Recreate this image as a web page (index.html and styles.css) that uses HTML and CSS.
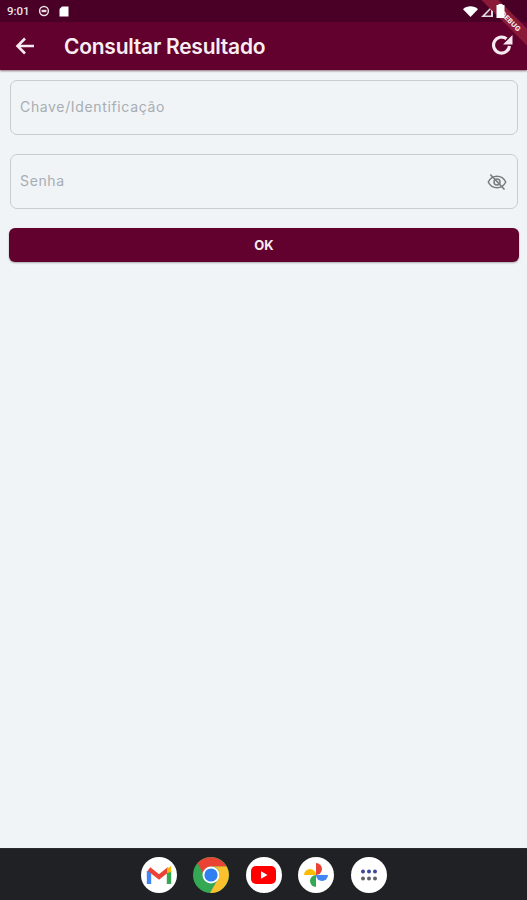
FILE: index.html
```html
<!DOCTYPE html>
<html lang="pt">
<head>
<meta charset="utf-8">
<title>Consultar Resultado</title>
<link rel="stylesheet" href="styles.css">
</head>
<body>
<div class="screen">
  <header class="status">
    <div class="status-left">
      <span class="time">9:01</span>
      <svg class="st-ic" width="12" height="12" viewBox="0 0 12 12"><circle cx="6" cy="6" r="4.4" fill="none" stroke="#e9dde3" stroke-width="1.5"/><rect x="3.6" y="4.8" width="4.8" height="2.4" fill="#e9dde3"/></svg>
      <svg class="st-ic sd" width="10" height="11" viewBox="0 0 10 11"><path d="M3 0.5H9.5V10.5H0.5V3Z" fill="#fff"/></svg>
    </div>
    <div class="status-right">
      <svg width="15" height="11" viewBox="0 0 15 11"><path d="M0 3.2C4 -0.6 11 -0.6 15 3.2L7.5 11Z" fill="#fff"/></svg>
      <svg width="12" height="12" viewBox="0 0 12 12"><path d="M12 0V12H0Z" fill="#ddd"/><path d="M10 4V10.4H4Z" fill="#5a0a30"/></svg>
      <svg class="battery" width="9" height="14" viewBox="0 0 9 14"><path d="M2.5 0H6.5V1H8.5V14H0.5V1H2.5Z" fill="#fff"/></svg>
    </div>
  </header>
  <nav class="appbar">
    <svg class="back" width="20" height="18" viewBox="0 0 20 18"><path d="M19 9H3M10 1.5L2.5 9L10 16.5" fill="none" stroke="#f6e9ef" stroke-width="2.6"/></svg>
    <h1 class="title">Consultar Resultado</h1>
    <svg class="refresh" width="24" height="24" viewBox="0 0 24 24"><path d="M19.5 13A8 8 0 1 1 16.5 5.8" fill="none" stroke="#f6e9ef" stroke-width="3.2"/><path d="M22.5 2V11.5H13Z" fill="#f6e9ef"/></svg>
  </nav>
  <div class="debug"><span>DEBUG</span></div>
  <main class="content">
    <div class="field"><span class="placeholder">Chave/Identificação</span></div>
    <div class="field">
      <span class="placeholder">Senha</span>
      <svg class="eye" width="20" height="20" viewBox="0 0 24 24"><path d="M1.5 12C4 7 8 5 12 5S20 7 22.5 12C20 17 16 19 12 19S4 17 1.5 12Z" fill="none" stroke="#777c81" stroke-width="1.8"/><circle cx="12" cy="12" r="3.6" fill="none" stroke="#777c81" stroke-width="1.8"/><path d="M4 3L21 21" stroke="#777c81" stroke-width="2"/></svg>
    </div>
    <button class="ok" type="button">OK</button>
  </main>
  <footer class="dock">
    <div class="app">
      <svg width="26" height="20" viewBox="0 0 26 20"><path d="M3 19V6" fill="none" stroke="#4285f4" stroke-width="4.4"/><path d="M23 19V6" fill="none" stroke="#34a853" stroke-width="4.4"/><path d="M3 4L13 12L23 4" fill="none" stroke="#ea4335" stroke-width="4.4"/><path d="M21 3.5L25.2 1V7L21 8Z" fill="#fbbc04"/></svg>
    </div>
    <div class="chrome">
      <svg width="36" height="36" viewBox="0 0 36 36"><circle cx="18" cy="18" r="18" fill="#34a853"/><path d="M18 9.5H33.6A18 18 0 0 0 4.6 6L11 18A7 7 0 0 1 18 9.5Z" fill="#ea4335"/><path d="M33.6 9.5A18 18 0 0 1 17 36L25 22A8 8 0 0 0 18 9.5Z" fill="#fbc02d"/><circle cx="18" cy="18" r="8.5" fill="#fff"/><circle cx="18" cy="18" r="6.6" fill="#2f7ff0"/></svg>
    </div>
    <div class="app">
      <svg width="25" height="18" viewBox="0 0 25 18"><rect width="25" height="18" rx="5" fill="#f00"/><path d="M10 5.2L16.5 9L10 12.8Z" fill="#fff"/></svg>
    </div>
    <div class="app">
      <svg width="28" height="28" viewBox="0 0 28 28"><path d="M14 14H2A6 6 0 0 1 14 14Z" fill="#fbbc04"/><path d="M14 14V2A6 6 0 0 1 14 14Z" fill="#ea4335"/><path d="M14 14H26A6 6 0 0 1 14 14Z" fill="#4285f4"/><path d="M14 14V26A6 6 0 0 1 14 14Z" fill="#34a853"/></svg>
    </div>
    <div class="app">
      <svg width="18" height="14" viewBox="0 0 18 14"><g fill="#3c4a9e"><circle cx="3" cy="3.5" r="2"/><circle cx="9" cy="3.5" r="2"/><circle cx="15" cy="3.5" r="2"/></g><g fill="#5f6368"><circle cx="3" cy="10.5" r="2"/><circle cx="9" cy="10.5" r="2"/><circle cx="15" cy="10.5" r="2"/></g></svg>
    </div>
  </footer>
</div>
</body>
</html>
```
FILE: styles.css
```css
* { box-sizing: border-box; }
html, body { margin: 0; height: 100%; }
body { background: #f0f4f7; font-family: "Inter", "Open Sans", sans-serif; overflow: hidden; }
.screen { position: relative; height: 900px; display: flex; flex-direction: column; overflow: hidden; }
.status { height: 22px; background: #4a0026; display: flex; justify-content: space-between; align-items: center; padding: 0 22px 0 7px; color: #efe3e9; }
.status-left { display: flex; align-items: center; gap: 6px; }
.status-right { display: flex; align-items: center; gap: 3px; }
.time { font-family: "Roboto", sans-serif; font-size: 11.5px; font-weight: 500; margin-right: 2px; }
.sd { margin-left: 3px; }
.battery { position: relative; z-index: 1; }
.appbar { height: 48px; background: #62002e; display: flex; align-items: center; padding: 0 13px 0 15px; box-shadow: 0 1px 2px rgba(60,0,20,.55); }
.back { flex: none; }
.title { flex: 1; margin: 0 0 0 29px; font-size: 21px; font-weight: 600; color: #f8eef2; letter-spacing: -.25px; line-height: 1; }
.refresh { flex: none; margin-top: -3px; }
.debug { position: absolute; top: 15px; right: -34px; width: 100px; height: 12px; background: #8a1a38; transform: rotate(45deg); display: flex; align-items: center; justify-content: center; }
.debug span { font-size: 7px; font-weight: 800; color: #f5e6ea; letter-spacing: .02em; }
.content { flex: 1; display: flex; flex-direction: column; gap: 19px; padding: 10px 8px 0 9px; }
.field { height: 55px; margin: 0 1px; border: 1.5px solid #c6ccd1; border-radius: 7px; display: flex; align-items: center; justify-content: space-between; padding: 0 10px 3px 9px; }
.eye { margin-top: 3px; }
.placeholder { font-size: 14px; color: #a8adb2; letter-spacing: .65px; }
.ok { height: 34px; border: 0; border-radius: 6px; background: #62002e; color: #f6ecf0; font-family: inherit; font-size: 13px; font-weight: 700; box-shadow: 0 1px 2px rgba(0,0,0,.3); }
.dock { height: 52px; background: #202124; display: flex; align-items: center; justify-content: center; gap: 16.5px; border-top: 1px solid #2a2b2e; }
.app { width: 36px; height: 36px; border-radius: 50%; background: #fff; display: flex; align-items: center; justify-content: center; }
.chrome { width: 36px; height: 36px; display: flex; }
```
